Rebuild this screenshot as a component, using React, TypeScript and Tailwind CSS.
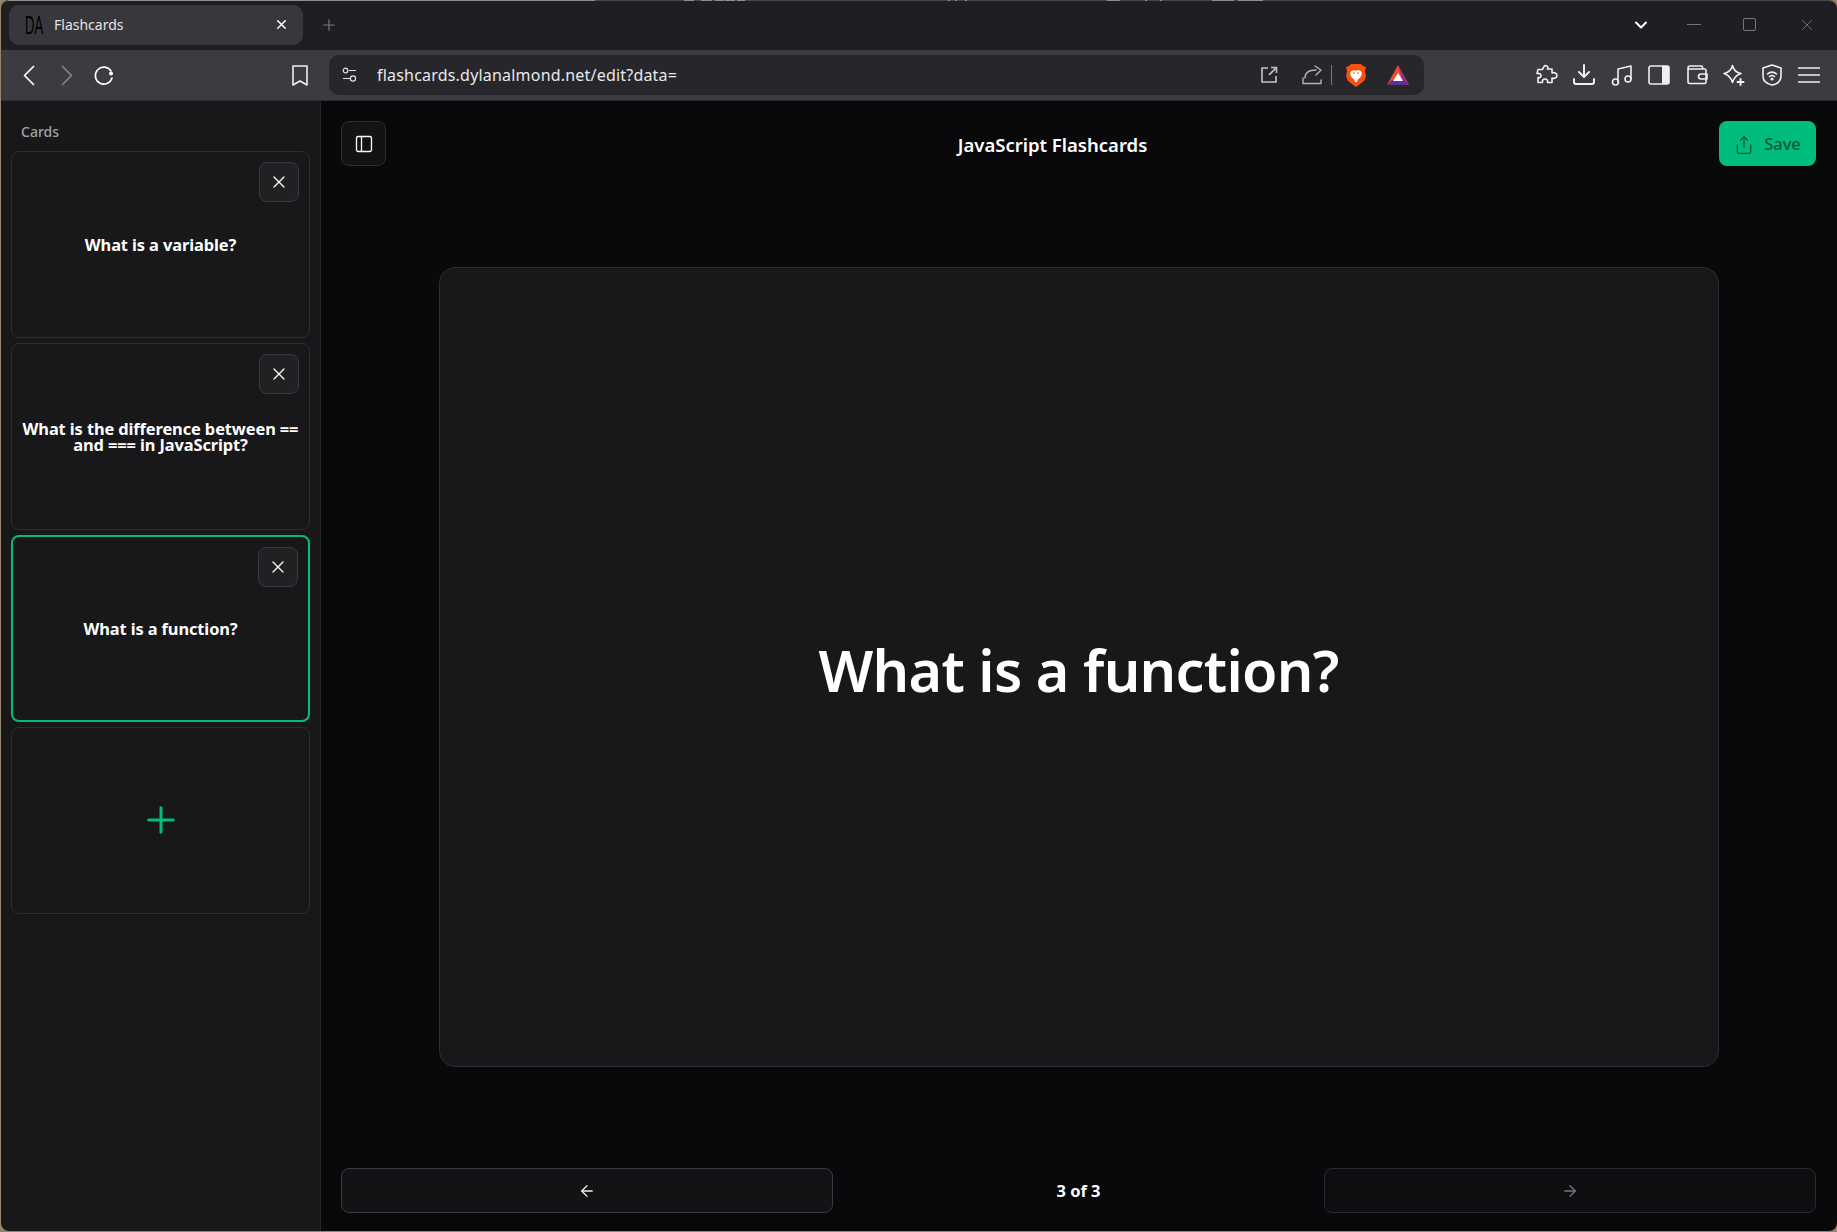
import { ArrowLeft, ArrowRight, ChevronDown, Plus, PanelLeft, Share, X } from "lucide-react";

const cards = [
  { id: 1, text: "What is a variable?" },
  { id: 2, text: "What is the difference between == and === in JavaScript?" },
  { id: 3, text: "What is a function?", active: true },
];

// bits of the desktop that show above the window's top edge: [left, width]
const desktopBits = [
  [8, 587],
  [684, 10],
  [701, 11],
  [715, 9],
  [725, 10],
  [737, 8],
  [948, 2],
  [955, 2],
  [965, 2],
  [1107, 13],
  [1145, 2],
  [1160, 2],
  [1212, 22],
  [1238, 25],
];

function ToolIcon({ children }: { children: React.ReactNode }) {
  return (
    <svg width="22" height="22" viewBox="0 0 22 22" fill="none" stroke="#f0f0f2" strokeWidth="1.6" strokeLinecap="round" strokeLinejoin="round">
      {children}
    </svg>
  );
}

function BrowserTabs() {
  return (
    <div className="flex h-[49px] shrink-0 items-center bg-[#1f1f23] pb-[2px] pl-[8px]">
      {/* Active tab */}
      <div className="flex h-10 w-[294px] items-center rounded-[10px] bg-[#38383c] pl-[16px] pr-[14px]">
        <span className="flex w-[29px] justify-start overflow-visible font-['Liberation_Sans',sans-serif] text-[26px] leading-none text-black">
          <span className="origin-left scale-x-[0.5]">DA</span>
        </span>
        <span className="flex-1 text-[14px] text-[#e4e4e7]">Flashcards</span>
        <X className="size-[15px] text-white" strokeWidth={2.4} />
      </div>
      <Plus className="ml-[17px] size-[18px] text-[#77777c]" strokeWidth={1.6} />
      <div className="flex-1" />
      <ChevronDown className="mr-[36px] size-[20px] text-white" strokeWidth={2.4} />
      {/* Window controls */}
      <div className="mr-[21px] flex items-center gap-[42px]">
        <span className="h-px w-[14px] bg-[#77777c]" />
        <span className="size-[13px] rounded-[2px] border border-[#77777c]" />
        <X className="size-[18px] text-[#77777c]" strokeWidth={1.2} />
      </div>
    </div>
  );
}

function AddressBar() {
  return (
    <div className="ml-[21px] flex h-10 w-[1095px] items-center rounded-[10px] bg-[#27272b] pl-[13px] pr-[15px]">
      <svg width="15" height="16" viewBox="0 0 15 16" fill="none" stroke="#e4e4e7" strokeWidth="1.2">
        <circle cx="3.5" cy="3.5" r="2.3" />
        <path d="M7 3.5h7M1 11.5h7" />
        <circle cx="11" cy="11.5" r="2.6" />
      </svg>
      <span className="ml-[20px] flex-1 text-[16px] tracking-[0.2px] text-[#e8e8ec]">flashcards.dylanalmond.net/edit?data=</span>
      {/* Open in app */}
      <svg className="mr-[24px]" width="18" height="18" viewBox="0 0 18 18" fill="none" stroke="#c4c4c8" strokeWidth="1.6">
        <path d="M8 2H2v14h14v-6M9 9l7-7M11 1.5h5.5V7" />
      </svg>
      <svg className="mr-[8px]" width="21" height="20" viewBox="0 0 21 20" fill="none" stroke="#b4b4b8" strokeWidth="1.4" strokeLinecap="round" strokeLinejoin="round">
        <path d="M1 13v5.500h18V15M3 13c0-5 4-8 11-8M13 1l6 4-5 5" />
      </svg>
      <span className="mr-[14px] h-[20px] w-px bg-[#77777c]" />
      {/* Brave lion */}
      <svg className="mr-[21px]" width="20" height="23" viewBox="0 0 20 23">
        <path d="M5 0h10l2 2 3 1-1 4 1 5-2 5-8 6-8-6-2-5 1-5-1-4 3-1z" fill="#fb4f10" />
        <path d="M5 7l3-1 2 1 2-1 3 1 1 3-2 4-2 1-1 3h-2l-1-3-2-1-2-4z" fill="#fff" />
        <path d="M7 9h2M11 9h2" stroke="#fb4f10" strokeWidth="1.2" />
      </svg>
      {/* Rewards triangle */}
      <svg width="22" height="20" viewBox="0 0 22 20">
        <path d="M11 0L0 20h22z" fill="#ef4a2f" />
        <path d="M11 0l11 20h-5z" fill="#8a2f8f" />
        <path d="M0 20l5-5h12l5 5z" fill="#662d91" />
        <path d="M11 8l5 8H6z" fill="#fff" />
      </svg>
    </div>
  );
}

function BrowserToolbar() {
  return (
    <div className="flex h-[51px] shrink-0 items-center border-b border-[#2c2c30] bg-[#3b3b40] pl-[22px]">
      <svg width="12" height="21" viewBox="0 0 12 21" fill="none" stroke="#fff" strokeWidth="1.7" strokeLinecap="round" strokeLinejoin="round">
        <path d="M10.500 1.500L1.500 10.500l9 9" />
      </svg>
      <svg className="ml-[26px]" width="12" height="21" viewBox="0 0 12 21" fill="none" stroke="#84848a" strokeWidth="1.7" strokeLinecap="round" strokeLinejoin="round">
        <path d="M1.500 1.500l9 9-9 9" />
      </svg>
      <svg className="ml-[20px]" width="22" height="22" viewBox="0 0 22 22" fill="none" stroke="#fff" strokeWidth="1.6" strokeLinecap="round">
        <path d="M18 7A8.500 8.500 0 1 0 19 14" />
        <circle cx="18" cy="9.500" r="2" fill="#fff" stroke="none" />
      </svg>
      <svg className="ml-[177px]" width="16" height="21" viewBox="0 0 16 21" fill="none" stroke="#f0f0f2" strokeWidth="1.6" strokeLinejoin="round">
        <path d="M1 1h14v19l-7-4-7 4z" />
      </svg>
      <AddressBar />
      {/* Extension icons */}
      <div className="ml-[105px] flex items-center">
        <div className="flex w-[36.500px] justify-center">
          <ToolIcon><path d="M8 2.500c1-1.500 4-1 4 1.500l-.500 1h4.500v4c2-1 5 0 5 2.500s-3 3.500-5 2.500v4.500h-4.500c.5-2-.5-3.500-2.500-3.500s-3 1.500-2.500 3.500H2v-5c2 .5 3-.5 3-2s-2-2.500-4-2l1-4h4.500z" /></ToolIcon>
        </div>
        <div className="flex w-[37.500px] justify-center">
          <ToolIcon><path d="M11 1v12M6 8l5 5 5-5" strokeWidth="2" /><path d="M1 15v3a2 2 0 0 0 2 2h16a2 2 0 0 0 2-2v-3" strokeWidth="2" /></ToolIcon>
        </div>
        <div className="flex w-[37.500px] justify-center">
          <ToolIcon><path d="M7 18V5l13-3v13" /><circle cx="4.500" cy="18" r="3" /><circle cx="17" cy="15" r="3" /></ToolIcon>
        </div>
        <div className="flex w-[37.500px] justify-center">
          <svg width="22" height="20" viewBox="0 0 22 20" fill="none">
            <rect x="1" y="1" width="20" height="18" rx="2" stroke="#f0f0f2" strokeWidth="1.6" />
            <path d="M14 1h5a2 2 0 0 1 2 2v14a2 2 0 0 1-2 2h-5z" fill="#f0f0f2" />
          </svg>
        </div>
        <div className="flex w-[37.500px] justify-center">
          <ToolIcon><path d="M2 4a2 2 0 0 1 2-2h12l1 3M2 4v14a1.500 1.500 0 0 0 1.500 1.500h15A1.500 1.500 0 0 0 20 18V6.500A1.500 1.500 0 0 0 18.500 5H3" /><path d="M21 10h-6a2 2 0 0 0 0 5h6z" /></ToolIcon>
        </div>
        <div className="flex w-[37.500px] justify-center">
          <ToolIcon><path d="M9.500 1.500c1 4 3 7 8.500 8-5 1.500-7 4-8.500 9-1.500-5-4-7.500-8.500-9 5-1 7.500-4 8.500-8z" /><path d="M17.500 15v6M14.500 18h6" strokeWidth="2" /></ToolIcon>
        </div>
        <div className="flex w-[37.500px] justify-center">
          <ToolIcon><path d="M11 1l9 3v8c0 5-4 8-9 9-5-1-9-4-9-9V4z" /><path d="M6.500 10c2.500-2.500 6.500-2.500 9 0M8.500 12.500c1.500-1.200 3.500-1.200 5 0" /><circle cx="11" cy="15" r=".8" fill="#f0f0f2" /></ToolIcon>
        </div>
        <div className="flex w-[37.500px] justify-center">
          <ToolIcon><path d="M0 4h22M0 11h22M0 18h22" /></ToolIcon>
        </div>
      </div>
    </div>
  );
}

function CardThumb({ text, active }: { text: string; active?: boolean }) {
  return (
    <div
      className={
        active
          ? "relative flex aspect-[16/10] items-center justify-center rounded-lg border-2 border-emerald-500 bg-[#18181b] p-2"
          : "relative flex aspect-[16/10] items-center justify-center rounded-lg border border-[#2e2e32] bg-[#18181b] p-2"
      }
    >
      <button className="absolute right-2.5 top-2.5 flex size-10 items-center justify-center rounded-lg border border-[#3a3a3e] bg-[#212124]">
        <X className="size-5 text-[#f4f4f5]" strokeWidth={1.6} />
      </button>
      <p className="pt-[2px] text-center text-[16.400px] font-bold leading-4 tracking-[-0.1px] text-white">{text}</p>
    </div>
  );
}

function Sidebar() {
  return (
    <aside className="flex w-[320px] shrink-0 flex-col border-r border-[#27272a] bg-[#18181b] px-2.5 pt-5">
      <h2 className="mb-[9px] pl-[10px] text-[14px] font-medium leading-[21px] text-[#a1a1aa]">Cards</h2>
      <div className="flex flex-col gap-[5px]">
        {cards.map((card) => (
          <CardThumb key={card.id} text={card.text} active={card.active} />
        ))}
        <div className="flex aspect-[16/10] items-center justify-center rounded-lg border border-[#2e2e32] bg-[#18181b]">
          <Plus className="size-[42px] text-emerald-500" strokeWidth={1.7} />
        </div>
      </div>
    </aside>
  );
}

function Editor() {
  return (
    <main className="flex flex-1 flex-col bg-[#09090b] pb-[18px] pl-5 pr-[21px] pt-5">
      <header className="flex items-center justify-between">
        <button className="flex size-[45px] items-center justify-center rounded-lg border border-[#2e2e32] bg-[#131316]">
          <PanelLeft className="size-5 text-white" strokeWidth={1.6} />
        </button>
        <h1 className="pt-[3px] text-[18.500px] font-semibold text-white">JavaScript Flashcards</h1>
        <button className="flex h-[45px] w-[97px] items-center justify-center gap-[10px] rounded-lg bg-emerald-500 pt-[2px] text-[16.500px] font-medium text-[#04573f]">
          <Share className="size-[20px]" strokeWidth={1.6} />
          Save
        </button>
      </header>

      <section className="flex flex-1 items-center justify-center">
        <div className="flex h-[800px] w-[1280px] items-center justify-center rounded-2xl border border-[#2e2e32] bg-[#18181b] pt-[8px]">
          <p className="text-[57.500px] font-semibold leading-none tracking-[-0.7px] text-white">What is a function?</p>
        </div>
      </section>

      <footer className="grid grid-cols-3 items-center">
        <button className="flex h-[45px] items-center justify-center rounded-lg border border-[#3a3a3e] bg-[#131316]">
          <ArrowLeft className="size-[18px] text-[#f0f0f2]" strokeWidth={1.7} />
        </button>
        <span className="pt-[2px] text-center text-[16.500px] font-bold text-white">3 of 3</span>
        <button className="flex h-[45px] items-center justify-center rounded-lg border border-[#2a2a2e] bg-[#0e0e11]">
          <ArrowRight className="size-[18px] text-[#77777c]" strokeWidth={1.7} />
        </button>
      </footer>
    </main>
  );
}

export default function App() {
  return (
    <div className="relative h-screen w-full overflow-hidden bg-[#9a8468] pb-px pl-px font-['Noto_Sans',sans-serif]">
      <div className="flex h-full flex-col overflow-hidden rounded-lg border-t border-[#47474a]">
        <BrowserTabs />
        <BrowserToolbar />
        <div className="flex min-h-0 flex-1">
          <Sidebar />
          <Editor />
        </div>
      </div>
      {desktopBits.map(([left, width]) => (
        <span key={left} className="absolute top-0 h-px bg-[#8e8e8e]" style={{ left, width }} />
      ))}
    </div>
  );
}
